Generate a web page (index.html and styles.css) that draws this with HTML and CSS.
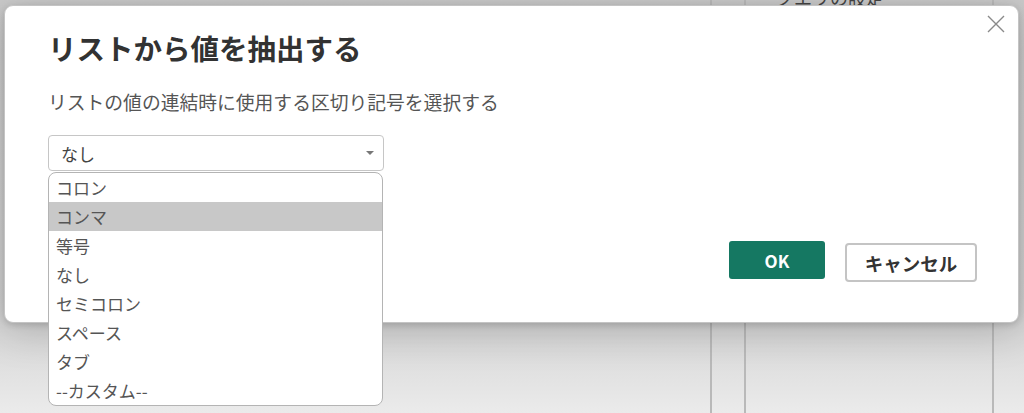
FILE: index.html
```html
<!DOCTYPE html>
<html lang="ja">
<head>
    <meta charset="UTF-8">
    <meta name="viewport" content="width=device-width, initial-scale=1.0">
    <title>リストから値を抽出する</title>
    <link rel="stylesheet" href="styles.css">
</head>
<body>

    <div class="app">
        <div class="pane pane-main"></div>
        <div class="pane pane-narrow"></div>
        <div class="pane pane-settings">
            <span class="pane-title">クエリの設定</span>
        </div>
        <div class="pane pane-edge"></div>
    </div>

    <div class="dialog">
        <button class="close-btn" aria-label="閉じる">
            <svg width="18" height="18" viewBox="0 0 18 18">
                <path d="M1 1 L17 17 M17 1 L1 17" stroke="#8a8a8a" stroke-width="1.4" fill="none"/>
            </svg>
        </button>

        <h1 class="dialog-title">リストから値を抽出する</h1>
        <p class="dialog-label">リストの値の連結時に使用する区切り記号を選択する</p>

        <div class="select-wrap">
            <div class="select">
                <span>なし</span>
                <span class="caret"></span>
            </div>
            <ul class="options">
                <li>コロン</li>
                <li class="active">コンマ</li>
                <li>等号</li>
                <li>なし</li>
                <li>セミコロン</li>
                <li>スペース</li>
                <li>タブ</li>
                <li>--カスタム--</li>
            </ul>
        </div>

        <div class="actions">
            <button class="btn btn-ok">OK</button>
            <button class="btn btn-cancel">キャンセル</button>
        </div>
    </div>

</body>
</html>
```

FILE: styles.css
```css
body {
    font-family: "Noto Sans CJK JP", "Noto Sans", sans-serif;
    margin: 0;
    padding: 0;
    width: 1024px;
    height: 413px;
    overflow: hidden;
    position: relative;
    background: linear-gradient(to bottom, #c9c9c9 0%, #d2d2d2 75%, #ebebeb 100%);
}

.app {
    display: flex;
    height: 413px;
}
.pane {
    height: 100%;
    box-sizing: border-box;
}
.pane-main {
    width: 710px;
}
.pane-narrow {
    width: 34px;
    border-left: 2px solid #b9b9b9;
}
.pane-settings {
    width: 250px;
    border-left: 2px solid #b9b9b9;
    border-right: 2px solid #b9b9b9;
    padding-left: 30px;
}
.pane-title {
    display: block;
    font-size: 18px;
    color: #444;
    margin-top: -16px;
}
.pane-edge {
    flex: 1;
}

.dialog {
    position: absolute;
    left: 4px;
    top: 5px;
    width: 1015px;
    height: 318px;
    box-sizing: border-box;
    background: white;
    border-radius: 9px;
    border: 1px solid #c4c4c4;
    box-shadow: 0 8px 40px rgba(0, 0, 0, 0.18), 0 2px 6px rgba(0, 0, 0, 0.15);
    padding: 24px 41px 0 43px;
}

.close-btn {
    position: absolute;
    top: 9px;
    right: 13px;
    background: none;
    border: none;
    padding: 0;
    width: 18px;
    height: 18px;
    cursor: pointer;
}

.dialog-title {
    margin: 0;
    font-size: 28.5px;
    font-weight: bold;
    color: #323232;
    line-height: 36px;
}

.dialog-label {
    margin: 22px 0 0;
    font-size: 18.8px;
    color: #555;
    line-height: 28px;
}

.select-wrap {
    position: relative;
    width: 336px;
    margin-top: 19px;
}
.select {
    height: 36px;
    box-sizing: border-box;
    border: 1.5px solid #c6c6c6;
    border-radius: 4px;
    display: flex;
    align-items: center;
    justify-content: space-between;
    padding: 0 9px 0 12px;
    font-size: 17px;
    color: #444;
}
.caret {
    width: 0;
    height: 0;
    border-left: 4px solid transparent;
    border-right: 4px solid transparent;
    border-top: 4px solid #777;
}

.options {
    position: absolute;
    left: 0;
    top: 37px;
    width: 335px;
    box-sizing: border-box;
    margin: 0;
    padding: 0;
    list-style: none;
    background: white;
    border: 1.5px solid #b4b4b4;
    border-radius: 8px;
    overflow: hidden;
    z-index: 10;
}
.options li {
    height: 29px;
    line-height: 29px;
    padding-left: 7px;
    font-size: 17px;
    color: #555;
}
.options li.active {
    background: #c8c8c8;
}

.actions {
    display: flex;
    justify-content: flex-end;
    gap: 20px;
    margin-top: 70px;
}
.btn {
    font-family: "Noto Sans CJK JP", "Noto Sans", sans-serif;
    font-weight: bold;
    cursor: pointer;
    box-sizing: border-box;
}
.btn-ok {
    width: 96px;
    height: 38px;
    background: #157862;
    color: white;
    border: none;
    border-radius: 3px;
    font-size: 17px;
}
.btn-cancel {
    width: 132px;
    height: 39px;
    margin-top: 2px;
    background: white;
    color: #333;
    border: 2px solid #c4c4c4;
    border-radius: 4px;
    font-size: 18.5px;
}
```
